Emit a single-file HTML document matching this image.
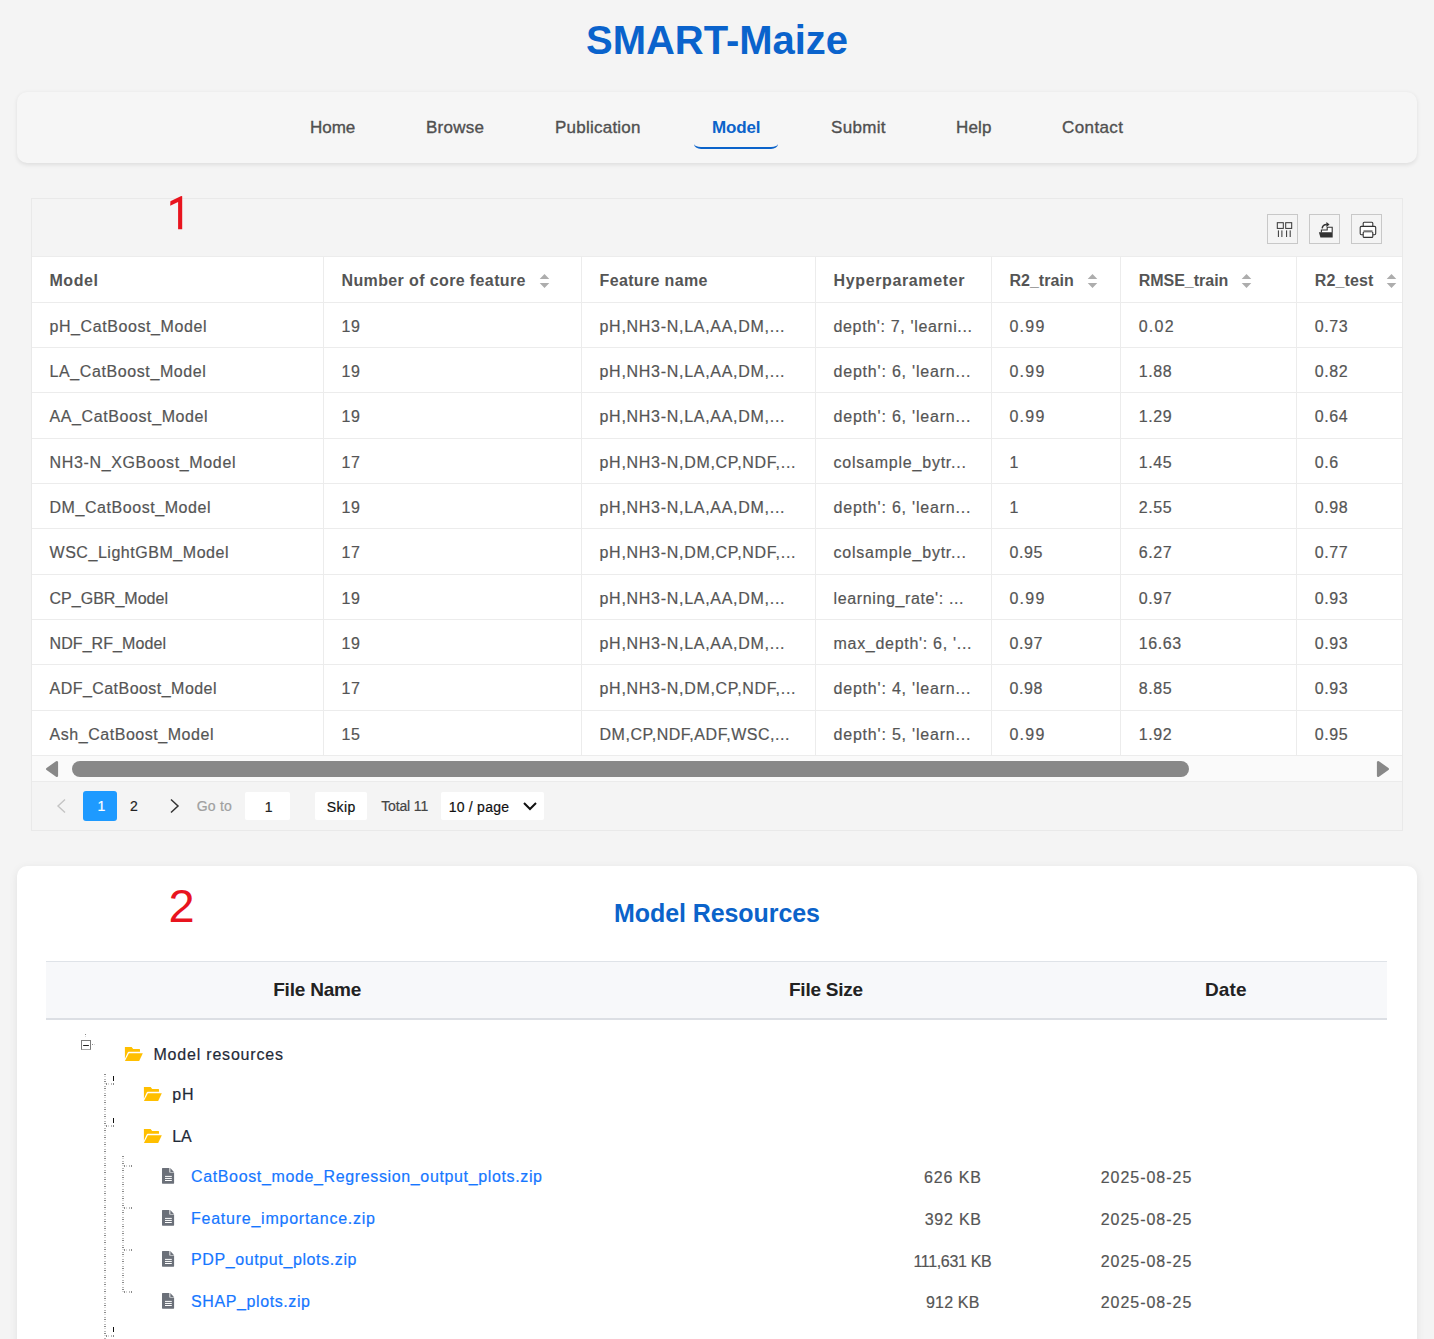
<!DOCTYPE html><html><head><meta charset="utf-8"><title>SMART-Maize</title><style>html,body{margin:0;padding:0;}body{width:1434px;height:1339px;overflow:hidden;position:relative;background:#f4f4f4;font-family:"Liberation Sans",sans-serif;}.t{position:absolute;line-height:0;height:0;white-space:pre;}</style></head><body><div style="position:absolute;left:17px;top:92px;width:1400px;height:71px;border-radius:10px;background:#f6f6f6;box-shadow:0 1.5px 4.5px rgba(0,0,0,0.09)"></div><div style="position:absolute;left:694px;top:140px;width:84px;height:7px;border-bottom:2.2px solid #0b63ca;border-radius:0 0 7px 7px / 0 0 5px 5px"></div><div style="position:absolute;left:31px;top:198px;width:1370px;height:631px;border:1px solid #e9e9e9;background:#f4f4f4"></div><div style="position:absolute;left:1267px;top:214px;width:29px;height:28px;border:1px solid #c8c8c8"></div><div style="position:absolute;left:1309px;top:214px;width:29px;height:28px;border:1px solid #c8c8c8"></div><div style="position:absolute;left:1351px;top:214px;width:29px;height:28px;border:1px solid #c8c8c8"></div><svg style="position:absolute;left:1267px;top:214px" width="31" height="30" viewBox="0 0 31 30">
<g fill="none" stroke="#333" stroke-width="1">
<rect x="10.3" y="8.7" width="6" height="5.7"/><rect x="18.7" y="8.7" width="6" height="5.7"/>
<path d="M11.4 16.4v6.6M14.9 16.4v6.6M19.6 16.4v6.6M23.2 16.4v6.6"/></g></svg><svg style="position:absolute;left:1309px;top:214px" width="31" height="30" viewBox="0 0 31 30">
<path d="M12.4 18.5 V16 H18.2 V13.2 H23.2 V18.5" fill="#fff" stroke="#333" stroke-width="1.1"/>
<path d="M9.9 18.2 H23.7 V23.6 H11.4z" fill="#333"/>
<path d="M13.2 14.4 C13.4 12 15.2 10.4 17.8 10.4" fill="none" stroke="#333" stroke-width="1.5"/>
<path d="M17.4 7.9 L20.6 10.4 L17.4 12.9z" fill="#333"/>
</svg><svg style="position:absolute;left:1351px;top:214px" width="31" height="30" viewBox="0 0 31 30">
<g fill="#fff" stroke="#333" stroke-width="1.1">
<rect x="12.2" y="8.3" width="9.6" height="4.5" rx="1"/>
<rect x="9.2" y="12.4" width="15.5" height="8.3" rx="1.2"/>
<rect x="12.2" y="17.8" width="9.6" height="5.6" rx="1"/></g>
<rect x="12.5" y="16" width="9" height="1.3" fill="#999"/>
</svg><div style="position:absolute;left:32px;top:257px;width:1370px;height:498px;background:#fff"></div><div style="position:absolute;left:32px;top:256.00px;width:1370px;height:1px;background:#ececec"></div><div style="position:absolute;left:32px;top:302.00px;width:1370px;height:1px;background:#ececec"></div><div style="position:absolute;left:32px;top:347.00px;width:1370px;height:1px;background:#ececec"></div><div style="position:absolute;left:32px;top:392.00px;width:1370px;height:1px;background:#ececec"></div><div style="position:absolute;left:32px;top:438.00px;width:1370px;height:1px;background:#ececec"></div><div style="position:absolute;left:32px;top:483.00px;width:1370px;height:1px;background:#ececec"></div><div style="position:absolute;left:32px;top:528.00px;width:1370px;height:1px;background:#ececec"></div><div style="position:absolute;left:32px;top:574.00px;width:1370px;height:1px;background:#ececec"></div><div style="position:absolute;left:32px;top:619.00px;width:1370px;height:1px;background:#ececec"></div><div style="position:absolute;left:32px;top:664.00px;width:1370px;height:1px;background:#ececec"></div><div style="position:absolute;left:32px;top:710.00px;width:1370px;height:1px;background:#ececec"></div><div style="position:absolute;left:32px;top:755.00px;width:1370px;height:1px;background:#ececec"></div><div style="position:absolute;left:323.0px;top:257px;width:1px;height:498px;background:#ececec"></div><div style="position:absolute;left:581.0px;top:257px;width:1px;height:498px;background:#ececec"></div><div style="position:absolute;left:815.0px;top:257px;width:1px;height:498px;background:#ececec"></div><div style="position:absolute;left:990.9px;top:257px;width:1px;height:498px;background:#ececec"></div><div style="position:absolute;left:1120.2px;top:257px;width:1px;height:498px;background:#ececec"></div><div style="position:absolute;left:1296.2px;top:257px;width:1px;height:498px;background:#ececec"></div><svg style="position:absolute;left:538.5px;top:273px" width="11" height="16" viewBox="0 0 11 16">
<path d="M5.5 1 L10.3 6 H0.7z M5.5 15 L10.3 10 H0.7z" fill="#adadad"/></svg><svg style="position:absolute;left:1086.5px;top:273px" width="11" height="16" viewBox="0 0 11 16">
<path d="M5.5 1 L10.3 6 H0.7z M5.5 15 L10.3 10 H0.7z" fill="#adadad"/></svg><svg style="position:absolute;left:1240.5px;top:273px" width="11" height="16" viewBox="0 0 11 16">
<path d="M5.5 1 L10.3 6 H0.7z M5.5 15 L10.3 10 H0.7z" fill="#adadad"/></svg><svg style="position:absolute;left:1385.5px;top:273px" width="11" height="16" viewBox="0 0 11 16">
<path d="M5.5 1 L10.3 6 H0.7z M5.5 15 L10.3 10 H0.7z" fill="#adadad"/></svg><div style="position:absolute;left:32px;top:756px;width:1370px;height:25px;background:#fafafa"></div><div style="position:absolute;left:32px;top:781px;width:1370px;height:1px;background:#ebebeb"></div><svg style="position:absolute;left:44px;top:759px" width="16" height="20" viewBox="0 0 16 20"><path d="M12.8 3.3 V16.7 L3.3 10z" fill="#888" stroke="#888" stroke-width="2.6" stroke-linejoin="round"/></svg><svg style="position:absolute;left:1375px;top:759px" width="16" height="20" viewBox="0 0 16 20"><path d="M3.2 3.3 V16.7 L12.7 10z" fill="#888" stroke="#888" stroke-width="2.6" stroke-linejoin="round"/></svg><div style="position:absolute;left:72px;top:761px;width:1117px;height:16px;border-radius:8px;background:#888"></div><svg style="position:absolute;left:54px;top:797px" width="14" height="18" viewBox="0 0 14 18"><path d="M11 2.5 L4 9 L11 15.5" fill="none" stroke="#c4c4c4" stroke-width="1.4"/></svg><div style="position:absolute;left:83px;top:791px;width:34px;height:30px;border-radius:3px;background:#1e9aff"></div><svg style="position:absolute;left:167px;top:797px" width="14" height="18" viewBox="0 0 14 18"><path d="M4 2.5 L11 9 L4 15.5" fill="none" stroke="#333" stroke-width="1.5"/></svg><div style="position:absolute;left:245px;top:792px;width:45px;height:28px;border-radius:2px;background:#fff"></div><div style="position:absolute;left:315px;top:792px;width:52px;height:28px;border-radius:2px;background:#fff"></div><div style="position:absolute;left:441px;top:792px;width:103px;height:28px;border-radius:2px;background:#fff"></div><svg style="position:absolute;left:521px;top:800px" width="18" height="12" viewBox="0 0 18 12"><path d="M3 3 L9 9 L15 3" fill="none" stroke="#111" stroke-width="2"/></svg><div style="position:absolute;left:17px;top:866px;width:1400px;height:600px;border-radius:10px;background:#fff;box-shadow:0 2px 8px rgba(0,0,0,0.08)"></div><div style="position:absolute;left:46px;top:961px;width:1341px;height:56px;background:#f7f8fa;border-top:1px solid #dfe3e8;border-bottom:2px solid #dcdfe4"></div><div style="position:absolute;left:85px;top:1034px;width:1px;height:5px;background:repeating-linear-gradient(to bottom,#8a8a8a 0 1px,transparent 1px 2.3px,#d9d9d9 2.3px 3.3px,transparent 3.3px 4.7px,#b8b8b8 4.7px 5.7px,transparent 5.7px 7px)"></div><div style="position:absolute;left:92px;top:1044px;width:4px;height:1px;background:repeating-linear-gradient(to right,#8a8a8a 0 1px,transparent 1px 2.3px,#d9d9d9 2.3px 3.3px,transparent 3.3px 4.7px,#b8b8b8 4.7px 5.7px,transparent 5.7px 7px)"></div><div style="position:absolute;left:80.5px;top:1040px;width:8.3px;height:8px;border:1.2px solid #7c7c7c;border-bottom:1.6px solid #a8a8a8;background:#fff"></div><div style="position:absolute;left:83.2px;top:1044.6px;width:5.4px;height:1.3px;background:#222;border-radius:0.5px"></div><div style="position:absolute;left:104px;top:1074px;width:2px;height:265px;background:repeating-linear-gradient(to bottom,#8a8a8a 0 1px,transparent 1px 2.3px,#d9d9d9 2.3px 3.3px,transparent 3.3px 4.7px,#b8b8b8 4.7px 5.7px,transparent 5.7px 7px)"></div><div style="position:absolute;left:113px;top:1076px;width:1.2px;height:5px;background:#111"></div><div style="position:absolute;left:113px;top:1118px;width:1.2px;height:5px;background:#111"></div><div style="position:absolute;left:113px;top:1327px;width:1.2px;height:5px;background:#111"></div><div style="position:absolute;left:106px;top:1083px;width:8px;height:2px;background:repeating-linear-gradient(to right,#8a8a8a 0 1px,transparent 1px 2.3px,#d9d9d9 2.3px 3.3px,transparent 3.3px 4.7px,#b8b8b8 4.7px 5.7px,transparent 5.7px 7px)"></div><div style="position:absolute;left:106px;top:1125px;width:8px;height:2px;background:repeating-linear-gradient(to right,#8a8a8a 0 1px,transparent 1px 2.3px,#d9d9d9 2.3px 3.3px,transparent 3.3px 4.7px,#b8b8b8 4.7px 5.7px,transparent 5.7px 7px)"></div><div style="position:absolute;left:106px;top:1335px;width:8px;height:2px;background:repeating-linear-gradient(to right,#8a8a8a 0 1px,transparent 1px 2.3px,#d9d9d9 2.3px 3.3px,transparent 3.3px 4.7px,#b8b8b8 4.7px 5.7px,transparent 5.7px 7px)"></div><div style="position:absolute;left:122px;top:1156px;width:2px;height:136px;background:repeating-linear-gradient(to bottom,#8a8a8a 0 1px,transparent 1px 2.3px,#d9d9d9 2.3px 3.3px,transparent 3.3px 4.7px,#b8b8b8 4.7px 5.7px,transparent 5.7px 7px)"></div><div style="position:absolute;left:124px;top:1165px;width:9px;height:2px;background:repeating-linear-gradient(to right,#8a8a8a 0 1px,transparent 1px 2.3px,#d9d9d9 2.3px 3.3px,transparent 3.3px 4.7px,#b8b8b8 4.7px 5.7px,transparent 5.7px 7px)"></div><div style="position:absolute;left:124px;top:1207px;width:9px;height:2px;background:repeating-linear-gradient(to right,#8a8a8a 0 1px,transparent 1px 2.3px,#d9d9d9 2.3px 3.3px,transparent 3.3px 4.7px,#b8b8b8 4.7px 5.7px,transparent 5.7px 7px)"></div><div style="position:absolute;left:124px;top:1249px;width:9px;height:2px;background:repeating-linear-gradient(to right,#8a8a8a 0 1px,transparent 1px 2.3px,#d9d9d9 2.3px 3.3px,transparent 3.3px 4.7px,#b8b8b8 4.7px 5.7px,transparent 5.7px 7px)"></div><div style="position:absolute;left:124px;top:1291px;width:9px;height:2px;background:repeating-linear-gradient(to right,#8a8a8a 0 1px,transparent 1px 2.3px,#d9d9d9 2.3px 3.3px,transparent 3.3px 4.7px,#b8b8b8 4.7px 5.7px,transparent 5.7px 7px)"></div><svg style="position:absolute;left:124px;top:1046px" width="19" height="15" viewBox="0 0 19 15">
<path d="M0.9 0.9 H7.6 L9.2 2.9 H15.4 Q16 2.9 16 3.6 V5.8 H4.8 Q4 5.8 3.6 6.8 L0.9 12.8z" fill="#ffbf00"/>
<path d="M4.9 7.2 H18.8 L15.2 14.9 H0.9z" fill="#ffbf00"/></svg><svg style="position:absolute;left:143px;top:1086px" width="19" height="15" viewBox="0 0 19 15">
<path d="M0.9 0.9 H7.6 L9.2 2.9 H15.4 Q16 2.9 16 3.6 V5.8 H4.8 Q4 5.8 3.6 6.8 L0.9 12.8z" fill="#ffbf00"/>
<path d="M4.9 7.2 H18.8 L15.2 14.9 H0.9z" fill="#ffbf00"/></svg><svg style="position:absolute;left:143px;top:1128px" width="19" height="15" viewBox="0 0 19 15">
<path d="M0.9 0.9 H7.6 L9.2 2.9 H15.4 Q16 2.9 16 3.6 V5.8 H4.8 Q4 5.8 3.6 6.8 L0.9 12.8z" fill="#ffbf00"/>
<path d="M4.9 7.2 H18.8 L15.2 14.9 H0.9z" fill="#ffbf00"/></svg><svg style="position:absolute;left:162px;top:1164px" width="13" height="20" viewBox="0 0 13 20">
<path d="M0.6 3.9 H7.4 V8.6 H12.1 V19.1 Q12.1 19.7 11.5 19.7 H0.6 Q0 19.7 0 19.1 V4.5 Q0 3.9 0.6 3.9z" fill="#6b7079"/>
<path d="M8.3 4.1 V7.9 H11.9z" fill="#6b7079"/>
<path d="M3 12.4h6.8M3 14.45h6.8M3 16.5h6.8" stroke="#fff" stroke-width="1"/></svg><svg style="position:absolute;left:162px;top:1206px" width="13" height="20" viewBox="0 0 13 20">
<path d="M0.6 3.9 H7.4 V8.6 H12.1 V19.1 Q12.1 19.7 11.5 19.7 H0.6 Q0 19.7 0 19.1 V4.5 Q0 3.9 0.6 3.9z" fill="#6b7079"/>
<path d="M8.3 4.1 V7.9 H11.9z" fill="#6b7079"/>
<path d="M3 12.4h6.8M3 14.45h6.8M3 16.5h6.8" stroke="#fff" stroke-width="1"/></svg><svg style="position:absolute;left:162px;top:1247px" width="13" height="20" viewBox="0 0 13 20">
<path d="M0.6 3.9 H7.4 V8.6 H12.1 V19.1 Q12.1 19.7 11.5 19.7 H0.6 Q0 19.7 0 19.1 V4.5 Q0 3.9 0.6 3.9z" fill="#6b7079"/>
<path d="M8.3 4.1 V7.9 H11.9z" fill="#6b7079"/>
<path d="M3 12.4h6.8M3 14.45h6.8M3 16.5h6.8" stroke="#fff" stroke-width="1"/></svg><svg style="position:absolute;left:162px;top:1289px" width="13" height="20" viewBox="0 0 13 20">
<path d="M0.6 3.9 H7.4 V8.6 H12.1 V19.1 Q12.1 19.7 11.5 19.7 H0.6 Q0 19.7 0 19.1 V4.5 Q0 3.9 0.6 3.9z" fill="#6b7079"/>
<path d="M8.3 4.1 V7.9 H11.9z" fill="#6b7079"/>
<path d="M3 12.4h6.8M3 14.45h6.8M3 16.5h6.8" stroke="#fff" stroke-width="1"/></svg><svg style="position:absolute;left:165px;top:190px" width="24" height="42" viewBox="165 190 24 42"><path d="M178.1 202 L170.2 205.8 L170.4 201.2 L181.2 196 L182.2 196.2 L182.2 229.2 L178.1 229.2z" fill="#e8141e"/></svg><div class="t" style="left:586.0px;top:40px;font-size:40px;font-weight:700;color:#0a63cc;letter-spacing:-0.025px;"><span>SMART-Maize</span></div><div class="t" style="left:310.0px;top:128px;font-size:17px;-webkit-text-stroke:0.35px currentColor;font-weight:400;color:#505050;letter-spacing:-0.020px;"><span>Home</span></div><div class="t" style="left:426.0px;top:128px;font-size:17px;-webkit-text-stroke:0.35px currentColor;font-weight:400;color:#505050;letter-spacing:0.263px;"><span>Browse</span></div><div class="t" style="left:555.0px;top:128px;font-size:17px;-webkit-text-stroke:0.35px currentColor;font-weight:400;color:#505050;letter-spacing:0.233px;"><span>Publication</span></div><div class="t" style="left:831.0px;top:128px;font-size:17px;-webkit-text-stroke:0.35px currentColor;font-weight:400;color:#505050;letter-spacing:0.316px;"><span>Submit</span></div><div class="t" style="left:956.0px;top:128px;font-size:17px;-webkit-text-stroke:0.35px currentColor;font-weight:400;color:#505050;letter-spacing:0.177px;"><span>Help</span></div><div class="t" style="left:1062.0px;top:128px;font-size:17px;-webkit-text-stroke:0.35px currentColor;font-weight:400;color:#505050;letter-spacing:0.401px;"><span>Contact</span></div><div class="t" style="left:712.0px;top:128px;font-size:17px;font-weight:700;color:#0b63ca;letter-spacing:-0.152px;"><span>Model</span></div><div class="t" style="left:49.5px;top:281px;font-size:16px;font-weight:700;color:#555;letter-spacing:0.545px;"><span>Model</span></div><div class="t" style="left:341.5px;top:281px;font-size:16px;font-weight:700;color:#555;letter-spacing:0.379px;"><span>Number of core feature</span></div><div class="t" style="left:599.5px;top:281px;font-size:16px;font-weight:700;color:#555;letter-spacing:0.359px;"><span>Feature name</span></div><div class="t" style="left:833.5px;top:281px;font-size:16px;font-weight:700;color:#555;letter-spacing:0.636px;"><span>Hyperparameter</span></div><div class="t" style="left:1009.4px;top:281px;font-size:16px;font-weight:700;color:#555;letter-spacing:0.038px;"><span>R2_train</span></div><div class="t" style="left:1138.7px;top:281px;font-size:16px;font-weight:700;color:#555;letter-spacing:-0.011px;"><span>RMSE_train</span></div><div class="t" style="left:1314.7px;top:281px;font-size:16px;font-weight:700;color:#555;letter-spacing:0.148px;"><span>R2_test</span></div><div class="t" style="left:49.5px;top:327px;font-size:16px;-webkit-text-stroke:0.2px currentColor;font-weight:400;color:#555;letter-spacing:0.585px;"><span>pH_CatBoost_Model</span></div><div class="t" style="left:341.5px;top:327px;font-size:16px;-webkit-text-stroke:0.2px currentColor;font-weight:400;color:#555;letter-spacing:0.600px;"><span>19</span></div><div class="t" style="left:599.5px;top:327px;font-size:16px;-webkit-text-stroke:0.2px currentColor;font-weight:400;color:#555;letter-spacing:0.715px;"><span>pH,NH3-N,LA,AA,DM,...</span></div><div class="t" style="left:833.5px;top:327px;font-size:16px;-webkit-text-stroke:0.2px currentColor;font-weight:400;color:#555;letter-spacing:0.660px;"><span>depth': 7, 'learni...</span></div><div class="t" style="left:1009.4px;top:327px;font-size:16px;-webkit-text-stroke:0.2px currentColor;font-weight:400;color:#555;letter-spacing:1.286px;"><span>0.99</span></div><div class="t" style="left:1138.7px;top:327px;font-size:16px;-webkit-text-stroke:0.2px currentColor;font-weight:400;color:#555;letter-spacing:1.286px;"><span>0.02</span></div><div class="t" style="left:1314.7px;top:327px;font-size:16px;-webkit-text-stroke:0.2px currentColor;font-weight:400;color:#555;letter-spacing:0.620px;"><span>0.73</span></div><div class="t" style="left:49.5px;top:372px;font-size:16px;-webkit-text-stroke:0.2px currentColor;font-weight:400;color:#555;letter-spacing:0.600px;"><span>LA_CatBoost_Model</span></div><div class="t" style="left:341.5px;top:372px;font-size:16px;-webkit-text-stroke:0.2px currentColor;font-weight:400;color:#555;letter-spacing:0.600px;"><span>19</span></div><div class="t" style="left:599.5px;top:372px;font-size:16px;-webkit-text-stroke:0.2px currentColor;font-weight:400;color:#555;letter-spacing:0.715px;"><span>pH,NH3-N,LA,AA,DM,...</span></div><div class="t" style="left:833.5px;top:372px;font-size:16px;-webkit-text-stroke:0.2px currentColor;font-weight:400;color:#555;letter-spacing:0.803px;"><span>depth': 6, 'learn...</span></div><div class="t" style="left:1009.4px;top:372px;font-size:16px;-webkit-text-stroke:0.2px currentColor;font-weight:400;color:#555;letter-spacing:1.286px;"><span>0.99</span></div><div class="t" style="left:1138.7px;top:372px;font-size:16px;-webkit-text-stroke:0.2px currentColor;font-weight:400;color:#555;letter-spacing:0.600px;"><span>1.88</span></div><div class="t" style="left:1314.7px;top:372px;font-size:16px;-webkit-text-stroke:0.2px currentColor;font-weight:400;color:#555;letter-spacing:0.600px;"><span>0.82</span></div><div class="t" style="left:49.5px;top:417px;font-size:16px;-webkit-text-stroke:0.2px currentColor;font-weight:400;color:#555;letter-spacing:0.600px;"><span>AA_CatBoost_Model</span></div><div class="t" style="left:341.5px;top:417px;font-size:16px;-webkit-text-stroke:0.2px currentColor;font-weight:400;color:#555;letter-spacing:0.600px;"><span>19</span></div><div class="t" style="left:599.5px;top:417px;font-size:16px;-webkit-text-stroke:0.2px currentColor;font-weight:400;color:#555;letter-spacing:0.715px;"><span>pH,NH3-N,LA,AA,DM,...</span></div><div class="t" style="left:833.5px;top:417px;font-size:16px;-webkit-text-stroke:0.2px currentColor;font-weight:400;color:#555;letter-spacing:0.803px;"><span>depth': 6, 'learn...</span></div><div class="t" style="left:1009.4px;top:417px;font-size:16px;-webkit-text-stroke:0.2px currentColor;font-weight:400;color:#555;letter-spacing:1.286px;"><span>0.99</span></div><div class="t" style="left:1138.7px;top:417px;font-size:16px;-webkit-text-stroke:0.2px currentColor;font-weight:400;color:#555;letter-spacing:0.600px;"><span>1.29</span></div><div class="t" style="left:1314.7px;top:417px;font-size:16px;-webkit-text-stroke:0.2px currentColor;font-weight:400;color:#555;letter-spacing:0.600px;"><span>0.64</span></div><div class="t" style="left:49.5px;top:463px;font-size:16px;-webkit-text-stroke:0.2px currentColor;font-weight:400;color:#555;letter-spacing:0.650px;"><span>NH3-N_XGBoost_Model</span></div><div class="t" style="left:341.5px;top:463px;font-size:16px;-webkit-text-stroke:0.2px currentColor;font-weight:400;color:#555;letter-spacing:0.600px;"><span>17</span></div><div class="t" style="left:599.5px;top:463px;font-size:16px;-webkit-text-stroke:0.2px currentColor;font-weight:400;color:#555;letter-spacing:0.711px;"><span>pH,NH3-N,DM,CP,NDF,...</span></div><div class="t" style="left:833.5px;top:463px;font-size:16px;-webkit-text-stroke:0.2px currentColor;font-weight:400;color:#555;letter-spacing:0.777px;"><span>colsample_bytr...</span></div><div class="t" style="left:1009.4px;top:463px;font-size:16px;-webkit-text-stroke:0.2px currentColor;font-weight:400;color:#555;letter-spacing:0.600px;"><span>1</span></div><div class="t" style="left:1138.7px;top:463px;font-size:16px;-webkit-text-stroke:0.2px currentColor;font-weight:400;color:#555;letter-spacing:0.600px;"><span>1.45</span></div><div class="t" style="left:1314.7px;top:463px;font-size:16px;-webkit-text-stroke:0.2px currentColor;font-weight:400;color:#555;letter-spacing:0.600px;"><span>0.6</span></div><div class="t" style="left:49.5px;top:508px;font-size:16px;-webkit-text-stroke:0.2px currentColor;font-weight:400;color:#555;letter-spacing:0.558px;"><span>DM_CatBoost_Model</span></div><div class="t" style="left:341.5px;top:508px;font-size:16px;-webkit-text-stroke:0.2px currentColor;font-weight:400;color:#555;letter-spacing:0.600px;"><span>19</span></div><div class="t" style="left:599.5px;top:508px;font-size:16px;-webkit-text-stroke:0.2px currentColor;font-weight:400;color:#555;letter-spacing:0.715px;"><span>pH,NH3-N,LA,AA,DM,...</span></div><div class="t" style="left:833.5px;top:508px;font-size:16px;-webkit-text-stroke:0.2px currentColor;font-weight:400;color:#555;letter-spacing:0.803px;"><span>depth': 6, 'learn...</span></div><div class="t" style="left:1009.4px;top:508px;font-size:16px;-webkit-text-stroke:0.2px currentColor;font-weight:400;color:#555;letter-spacing:0.600px;"><span>1</span></div><div class="t" style="left:1138.7px;top:508px;font-size:16px;-webkit-text-stroke:0.2px currentColor;font-weight:400;color:#555;letter-spacing:0.600px;"><span>2.55</span></div><div class="t" style="left:1314.7px;top:508px;font-size:16px;-webkit-text-stroke:0.2px currentColor;font-weight:400;color:#555;letter-spacing:0.600px;"><span>0.98</span></div><div class="t" style="left:49.5px;top:553px;font-size:16px;-webkit-text-stroke:0.2px currentColor;font-weight:400;color:#555;letter-spacing:0.539px;"><span>WSC_LightGBM_Model</span></div><div class="t" style="left:341.5px;top:553px;font-size:16px;-webkit-text-stroke:0.2px currentColor;font-weight:400;color:#555;letter-spacing:0.600px;"><span>17</span></div><div class="t" style="left:599.5px;top:553px;font-size:16px;-webkit-text-stroke:0.2px currentColor;font-weight:400;color:#555;letter-spacing:0.711px;"><span>pH,NH3-N,DM,CP,NDF,...</span></div><div class="t" style="left:833.5px;top:553px;font-size:16px;-webkit-text-stroke:0.2px currentColor;font-weight:400;color:#555;letter-spacing:0.777px;"><span>colsample_bytr...</span></div><div class="t" style="left:1009.4px;top:553px;font-size:16px;-webkit-text-stroke:0.2px currentColor;font-weight:400;color:#555;letter-spacing:0.600px;"><span>0.95</span></div><div class="t" style="left:1138.7px;top:553px;font-size:16px;-webkit-text-stroke:0.2px currentColor;font-weight:400;color:#555;letter-spacing:0.600px;"><span>6.27</span></div><div class="t" style="left:1314.7px;top:553px;font-size:16px;-webkit-text-stroke:0.2px currentColor;font-weight:400;color:#555;letter-spacing:0.600px;"><span>0.77</span></div><div class="t" style="left:49.5px;top:599px;font-size:16px;-webkit-text-stroke:0.2px currentColor;font-weight:400;color:#555;letter-spacing:0.020px;"><span>CP_GBR_Model</span></div><div class="t" style="left:341.5px;top:599px;font-size:16px;-webkit-text-stroke:0.2px currentColor;font-weight:400;color:#555;letter-spacing:0.600px;"><span>19</span></div><div class="t" style="left:599.5px;top:599px;font-size:16px;-webkit-text-stroke:0.2px currentColor;font-weight:400;color:#555;letter-spacing:0.715px;"><span>pH,NH3-N,LA,AA,DM,...</span></div><div class="t" style="left:833.5px;top:599px;font-size:16px;-webkit-text-stroke:0.2px currentColor;font-weight:400;color:#555;letter-spacing:0.628px;"><span>learning_rate': ...</span></div><div class="t" style="left:1009.4px;top:599px;font-size:16px;-webkit-text-stroke:0.2px currentColor;font-weight:400;color:#555;letter-spacing:1.286px;"><span>0.99</span></div><div class="t" style="left:1138.7px;top:599px;font-size:16px;-webkit-text-stroke:0.2px currentColor;font-weight:400;color:#555;letter-spacing:0.600px;"><span>0.97</span></div><div class="t" style="left:1314.7px;top:599px;font-size:16px;-webkit-text-stroke:0.2px currentColor;font-weight:400;color:#555;letter-spacing:0.600px;"><span>0.93</span></div><div class="t" style="left:49.5px;top:644px;font-size:16px;-webkit-text-stroke:0.2px currentColor;font-weight:400;color:#555;letter-spacing:0.082px;"><span>NDF_RF_Model</span></div><div class="t" style="left:341.5px;top:644px;font-size:16px;-webkit-text-stroke:0.2px currentColor;font-weight:400;color:#555;letter-spacing:0.600px;"><span>19</span></div><div class="t" style="left:599.5px;top:644px;font-size:16px;-webkit-text-stroke:0.2px currentColor;font-weight:400;color:#555;letter-spacing:0.715px;"><span>pH,NH3-N,LA,AA,DM,...</span></div><div class="t" style="left:833.5px;top:644px;font-size:16px;-webkit-text-stroke:0.2px currentColor;font-weight:400;color:#555;letter-spacing:0.706px;"><span>max_depth': 6, '...</span></div><div class="t" style="left:1009.4px;top:644px;font-size:16px;-webkit-text-stroke:0.2px currentColor;font-weight:400;color:#555;letter-spacing:0.600px;"><span>0.97</span></div><div class="t" style="left:1138.7px;top:644px;font-size:16px;-webkit-text-stroke:0.2px currentColor;font-weight:400;color:#555;letter-spacing:0.600px;"><span>16.63</span></div><div class="t" style="left:1314.7px;top:644px;font-size:16px;-webkit-text-stroke:0.2px currentColor;font-weight:400;color:#555;letter-spacing:0.600px;"><span>0.93</span></div><div class="t" style="left:49.5px;top:689px;font-size:16px;-webkit-text-stroke:0.2px currentColor;font-weight:400;color:#555;letter-spacing:0.460px;"><span>ADF_CatBoost_Model</span></div><div class="t" style="left:341.5px;top:689px;font-size:16px;-webkit-text-stroke:0.2px currentColor;font-weight:400;color:#555;letter-spacing:0.600px;"><span>17</span></div><div class="t" style="left:599.5px;top:689px;font-size:16px;-webkit-text-stroke:0.2px currentColor;font-weight:400;color:#555;letter-spacing:0.711px;"><span>pH,NH3-N,DM,CP,NDF,...</span></div><div class="t" style="left:833.5px;top:689px;font-size:16px;-webkit-text-stroke:0.2px currentColor;font-weight:400;color:#555;letter-spacing:0.803px;"><span>depth': 4, 'learn...</span></div><div class="t" style="left:1009.4px;top:689px;font-size:16px;-webkit-text-stroke:0.2px currentColor;font-weight:400;color:#555;letter-spacing:0.600px;"><span>0.98</span></div><div class="t" style="left:1138.7px;top:689px;font-size:16px;-webkit-text-stroke:0.2px currentColor;font-weight:400;color:#555;letter-spacing:0.600px;"><span>8.85</span></div><div class="t" style="left:1314.7px;top:689px;font-size:16px;-webkit-text-stroke:0.2px currentColor;font-weight:400;color:#555;letter-spacing:0.600px;"><span>0.93</span></div><div class="t" style="left:49.5px;top:735px;font-size:16px;-webkit-text-stroke:0.2px currentColor;font-weight:400;color:#555;letter-spacing:0.543px;"><span>Ash_CatBoost_Model</span></div><div class="t" style="left:341.5px;top:735px;font-size:16px;-webkit-text-stroke:0.2px currentColor;font-weight:400;color:#555;letter-spacing:0.600px;"><span>15</span></div><div class="t" style="left:599.5px;top:735px;font-size:16px;-webkit-text-stroke:0.2px currentColor;font-weight:400;color:#555;letter-spacing:0.536px;"><span>DM,CP,NDF,ADF,WSC,...</span></div><div class="t" style="left:833.5px;top:735px;font-size:16px;-webkit-text-stroke:0.2px currentColor;font-weight:400;color:#555;letter-spacing:0.803px;"><span>depth': 5, 'learn...</span></div><div class="t" style="left:1009.4px;top:735px;font-size:16px;-webkit-text-stroke:0.2px currentColor;font-weight:400;color:#555;letter-spacing:1.286px;"><span>0.99</span></div><div class="t" style="left:1138.7px;top:735px;font-size:16px;-webkit-text-stroke:0.2px currentColor;font-weight:400;color:#555;letter-spacing:0.600px;"><span>1.92</span></div><div class="t" style="left:1314.7px;top:735px;font-size:16px;-webkit-text-stroke:0.2px currentColor;font-weight:400;color:#555;letter-spacing:0.600px;"><span>0.95</span></div><div class="t" style="left:168.5px;top:906px;font-size:47px;font-weight:400;color:#e8141e;"><span>2</span></div><div class="t" style="left:97.5px;top:806px;font-size:14px;-webkit-text-stroke:0.2px currentColor;font-weight:400;color:#fff;"><span>1</span></div><div class="t" style="left:130.0px;top:806px;font-size:14px;-webkit-text-stroke:0.2px currentColor;font-weight:400;color:#222;"><span>2</span></div><div class="t" style="left:196.8px;top:806px;font-size:14px;-webkit-text-stroke:0.2px currentColor;font-weight:400;color:#a0a0a0;letter-spacing:0.188px;"><span>Go to</span></div><div class="t" style="left:264.8px;top:807px;font-size:14px;-webkit-text-stroke:0.2px currentColor;font-weight:400;color:#222;"><span>1</span></div><div class="t" style="left:326.8px;top:807px;font-size:14px;-webkit-text-stroke:0.2px currentColor;font-weight:400;color:#111;letter-spacing:0.422px;"><span>Skip</span></div><div class="t" style="left:381.2px;top:806px;font-size:14px;-webkit-text-stroke:0.2px currentColor;font-weight:400;color:#444;letter-spacing:-0.143px;"><span>Total 11</span></div><div class="t" style="left:448.7px;top:807px;font-size:14px;-webkit-text-stroke:0.2px currentColor;font-weight:400;color:#111;letter-spacing:0.239px;"><span>10 / page</span></div><div class="t" style="left:614.0px;top:913px;font-size:25px;font-weight:700;color:#0b63ca;letter-spacing:-0.073px;"><span>Model Resources</span></div><div class="t" style="left:273.2px;top:990px;font-size:19px;font-weight:700;color:#222;letter-spacing:-0.196px;"><span>File Name</span></div><div class="t" style="left:789.0px;top:990px;font-size:19px;font-weight:700;color:#222;letter-spacing:-0.254px;"><span>File Size</span></div><div class="t" style="left:1205.0px;top:990px;font-size:19px;font-weight:700;color:#222;letter-spacing:0.104px;"><span>Date</span></div><div class="t" style="left:153.4px;top:1055px;font-size:16px;-webkit-text-stroke:0.2px currentColor;font-weight:400;color:#1f2a37;letter-spacing:0.808px;"><span>Model resources</span></div><div class="t" style="left:172.2px;top:1095px;font-size:16px;-webkit-text-stroke:0.2px currentColor;font-weight:400;color:#1f2a37;letter-spacing:0.847px;"><span>pH</span></div><div class="t" style="left:172.2px;top:1137px;font-size:16px;-webkit-text-stroke:0.2px currentColor;font-weight:400;color:#1f2a37;letter-spacing:-0.078px;"><span>LA</span></div><div class="t" style="left:191.0px;top:1177px;font-size:16px;-webkit-text-stroke:0.2px currentColor;font-weight:400;color:#1677ff;letter-spacing:0.636px;"><span>CatBoost_mode_Regression_output_plots.zip</span></div><div class="t" style="left:924.0px;top:1178px;font-size:16px;-webkit-text-stroke:0.2px currentColor;font-weight:400;color:#555;letter-spacing:0.903px;"><span>626 KB</span></div><div class="t" style="left:1100.7px;top:1178px;font-size:16px;-webkit-text-stroke:0.2px currentColor;font-weight:400;color:#555;letter-spacing:0.973px;"><span>2025-08-25</span></div><div class="t" style="left:191.0px;top:1219px;font-size:16px;-webkit-text-stroke:0.2px currentColor;font-weight:400;color:#1677ff;letter-spacing:0.757px;"><span>Feature_importance.zip</span></div><div class="t" style="left:924.7px;top:1220px;font-size:16px;-webkit-text-stroke:0.2px currentColor;font-weight:400;color:#555;letter-spacing:0.763px;"><span>392 KB</span></div><div class="t" style="left:1100.7px;top:1220px;font-size:16px;-webkit-text-stroke:0.2px currentColor;font-weight:400;color:#555;letter-spacing:0.973px;"><span>2025-08-25</span></div><div class="t" style="left:191.0px;top:1260px;font-size:16px;-webkit-text-stroke:0.2px currentColor;font-weight:400;color:#1677ff;letter-spacing:0.612px;"><span>PDP_output_plots.zip</span></div><div class="t" style="left:913.4px;top:1262px;font-size:16px;-webkit-text-stroke:0.2px currentColor;font-weight:400;color:#555;letter-spacing:-0.328px;"><span>111,631 KB</span></div><div class="t" style="left:1100.7px;top:1262px;font-size:16px;-webkit-text-stroke:0.2px currentColor;font-weight:400;color:#555;letter-spacing:0.973px;"><span>2025-08-25</span></div><div class="t" style="left:191.0px;top:1302px;font-size:16px;-webkit-text-stroke:0.2px currentColor;font-weight:400;color:#1677ff;letter-spacing:0.602px;"><span>SHAP_plots.zip</span></div><div class="t" style="left:926.0px;top:1303px;font-size:16px;-webkit-text-stroke:0.2px currentColor;font-weight:400;color:#555;letter-spacing:0.183px;"><span>912 KB</span></div><div class="t" style="left:1100.7px;top:1303px;font-size:16px;-webkit-text-stroke:0.2px currentColor;font-weight:400;color:#555;letter-spacing:0.973px;"><span>2025-08-25</span></div></body></html>
